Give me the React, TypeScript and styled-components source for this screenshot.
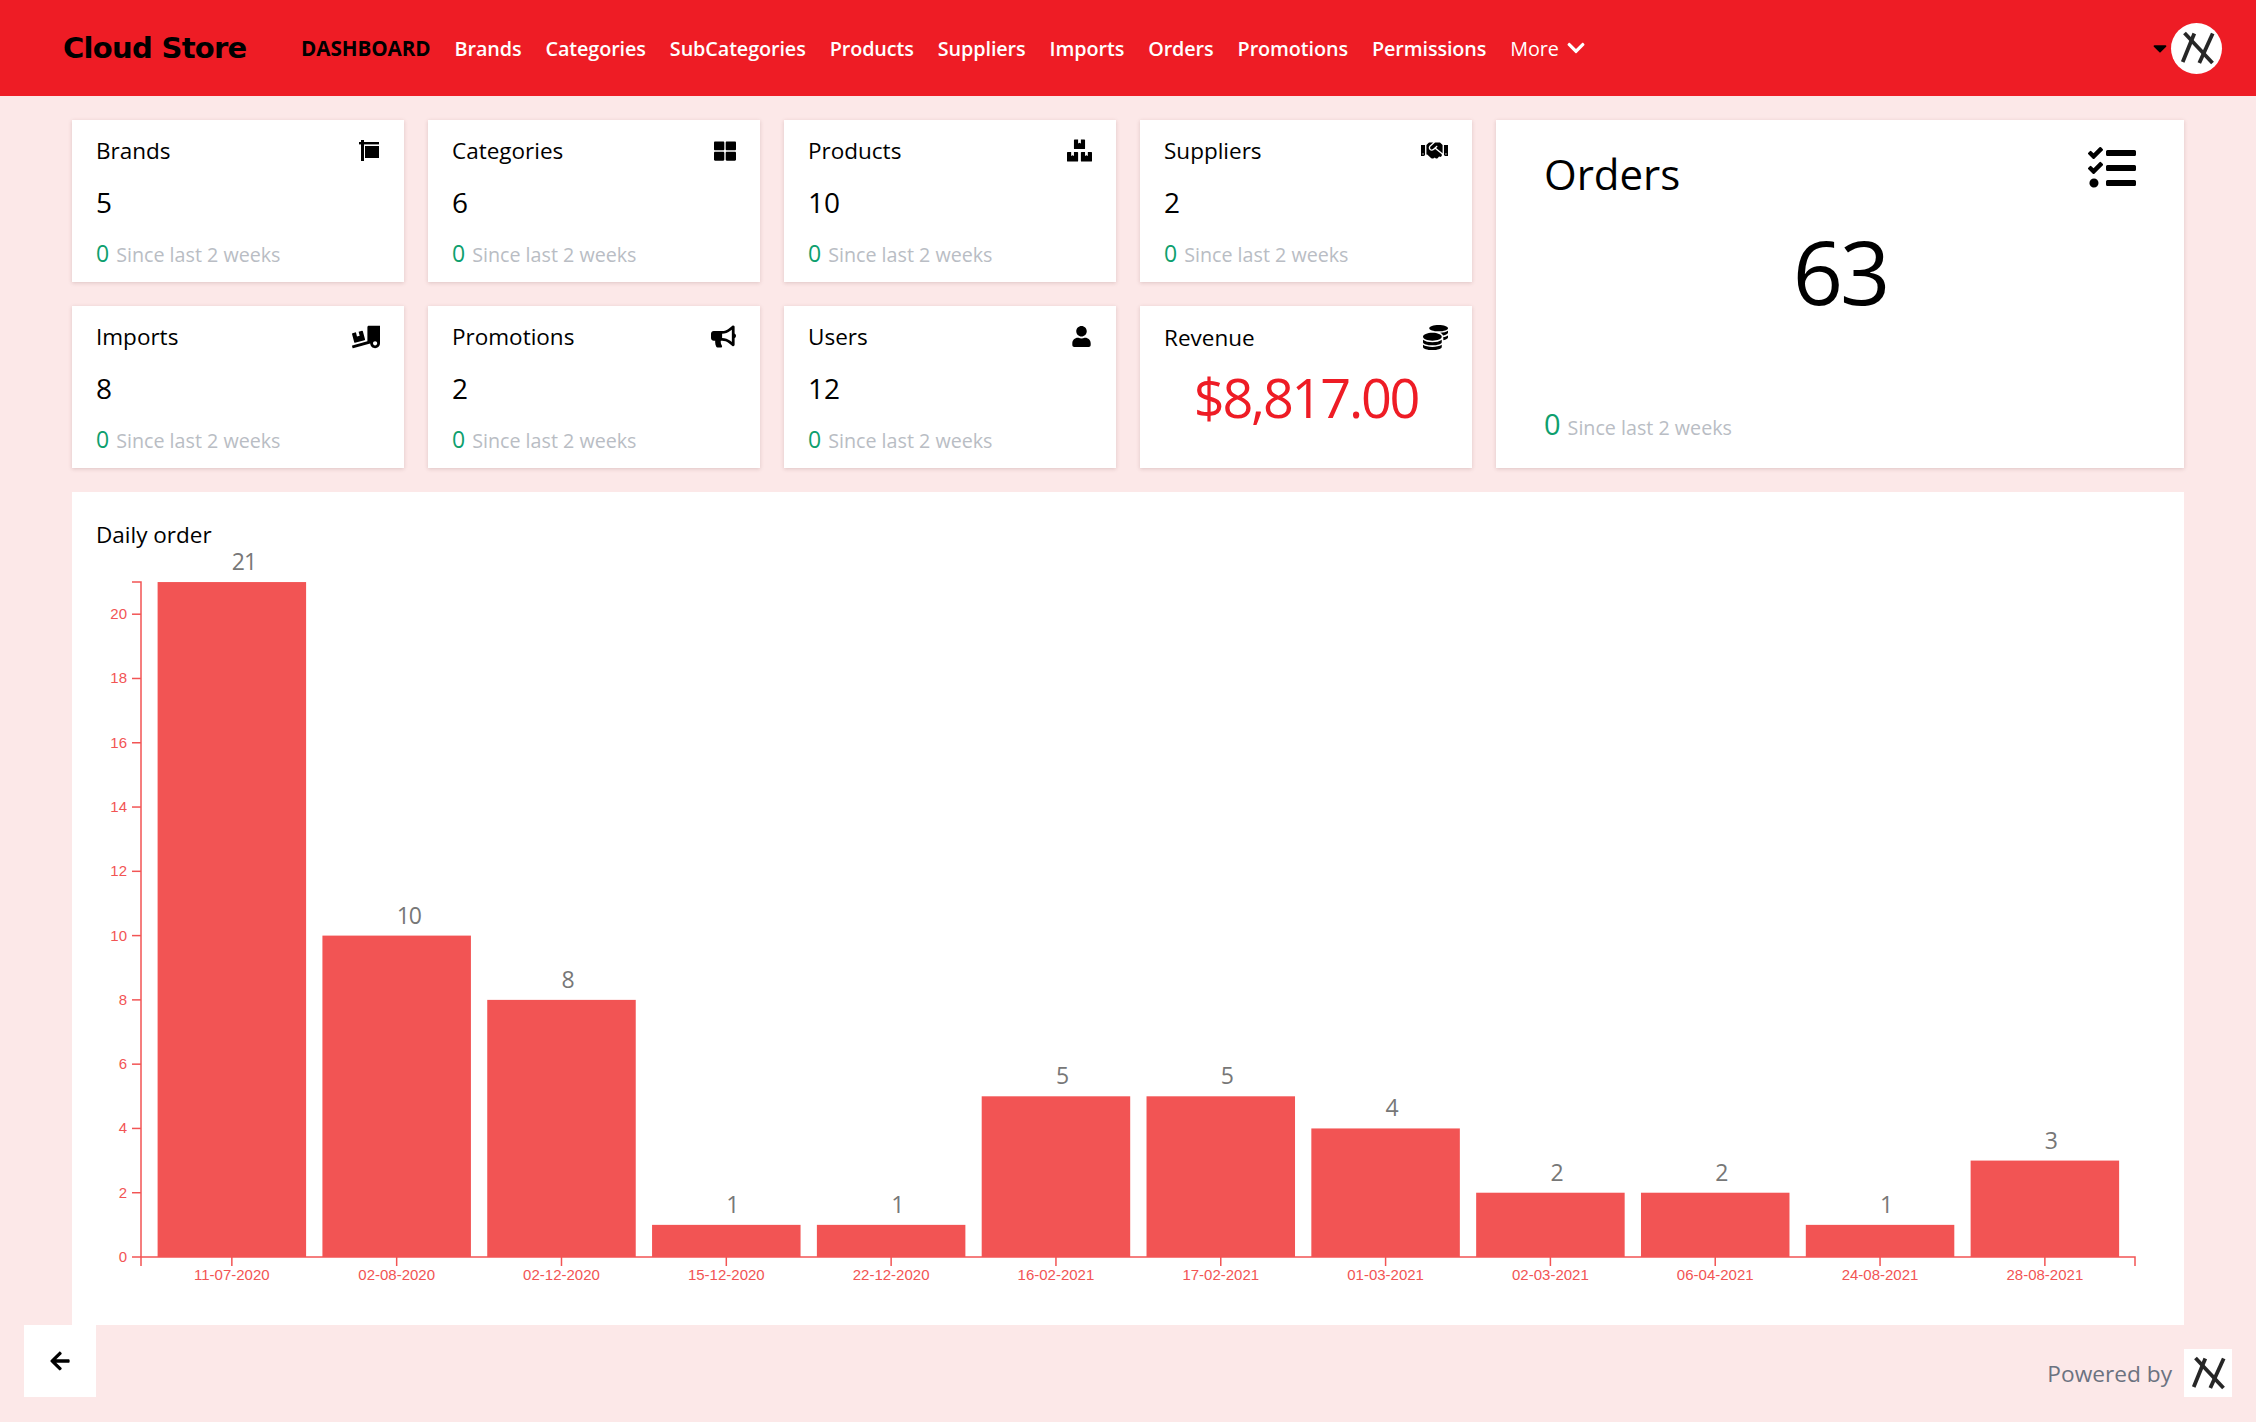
import React from "react"
import styled, { createGlobalStyle } from "styled-components"
import {
    FaArrowLeft,
    FaBoxes,
    FaBullhorn,
    FaCaretDown,
    FaChevronDown,
    FaCoins,
    FaHandshake,
    FaTasks,
    FaThLarge,
    FaTruckLoading,
    FaUser,
} from "react-icons/fa"

const RED = "#ee1c25"
const BAR = "#f25454"

const GlobalStyle = createGlobalStyle`
    html, body {
        margin: 0;
        padding: 0;
        background: #fce8e8;
    }
    body {
        font-family: "Open Sans", "Noto Sans", sans-serif;
        color: #000;
    }
    * {
        box-sizing: border-box;
    }
`

const Page = styled.div`
    width: 2256px;
    height: 1422px;
    overflow: hidden;
    background: #fce8e8;
`

const Header = styled.header`
    display: flex;
    align-items: center;
    height: 96px;
    padding: 0 34px 0 63px;
    background: ${RED};
`

const Logo = styled.div`
    width: 238px;
    font-family: "DejaVu Sans", sans-serif;
    font-size: 29px;
    font-weight: 700;
    letter-spacing: -0.7px;
    color: #000;
`

const Nav = styled.nav`
    display: flex;
    align-items: center;
    gap: 24px;
`

const NavLink = styled.a<{ $active?: boolean; $light?: boolean }>`
    display: flex;
    align-items: center;
    gap: 7px;
    font-size: ${(p) => (p.$active ? "20.7px" : "19.8px")};
    font-weight: ${(p) => (p.$active ? 700 : p.$light ? 400 : 600)};
    letter-spacing: -0.1px;
    color: ${(p) => (p.$active ? "#000" : "#fff")};
    text-transform: ${(p) => (p.$active ? "uppercase" : "none")};
`

const UserMenu = styled.div`
    display: flex;
    align-items: center;
    margin-left: auto;
`

const Avatar = styled.div`
    display: flex;
    align-items: center;
    justify-content: center;
    width: 51px;
    height: 51px;
    border-radius: 50%;
    background: #fff;
`

const Main = styled.main`
    padding: 24px 72px 0;
`

const StatGrid = styled.section`
    display: grid;
    grid-template-columns: repeat(4, 332px) 688px;
    grid-template-rows: 162px 162px;
    gap: 24px;
`

const Card = styled.div`
    display: flex;
    flex-direction: column;
    padding: 15px 24px 11px;
    background: #fff;
    box-shadow: 0 1px 4px rgba(120, 70, 70, 0.22);
`

const OrdersCard = styled(Card)`
    grid-column: 5;
    grid-row: 1 / span 2;
    padding: 24px 48px 21px;
`

const CardHead = styled.div`
    display: flex;
    align-items: center;
    justify-content: space-between;
    height: 32px;
    font-size: 22.5px;
`

const OrdersHead = styled(CardHead)`
    align-items: flex-start;
    height: 60px;
    font-size: 42px;
    line-height: 60px;
`

const CardValue = styled.div`
    margin-top: 17px;
    font-size: 28px;
    line-height: 38px;
`

const RevenueValue = styled.div`
    margin-top: 9px;
    font-size: 54px;
    line-height: 70px;
    letter-spacing: -2.2px;
    text-align: center;
    color: ${RED};
`

const OrdersValue = styled.div`
    margin-top: 17px;
    font-size: 88px;
    line-height: 100px;
    letter-spacing: -3px;
    text-align: center;
`

const CardFoot = styled.div<{ $big?: boolean }>`
    display: flex;
    align-items: baseline;
    gap: 7px;
    margin-top: ${(p) => (p.$big ? "auto" : "16px")};
    line-height: ${(p) => (p.$big ? "38px" : "32px")};
    font-size: 19.7px;
    color: #b9bdc4;
`

const Growth = styled.span<{ $big?: boolean }>`
    font-size: ${(p) => (p.$big ? "29px" : "23px")};
    color: #0e9f6e;
`

const ChartPanel = styled.section`
    height: 833px;
    margin-top: 24px;
    padding-top: 23px;
    background: #fff;
`

const ChartTitle = styled.div`
    height: 41px;
    padding-left: 24px;
    font-size: 22.5px;
    line-height: 40px;
`

const ChartSvg = styled.svg`
    display: block;
    overflow: visible;
`

const Footer = styled.footer`
    display: flex;
    align-items: flex-end;
    justify-content: space-between;
    height: 72px;
    padding: 0 24px;
`

const BackButton = styled.button`
    display: flex;
    align-items: center;
    justify-content: center;
    width: 72px;
    height: 72px;
    padding: 0;
    border: 0;
    background: #fff;
    color: #000;
    font-size: 22px;
`

const Powered = styled.div`
    display: flex;
    align-items: center;
    gap: 12px;
    font-size: 22.7px;
    color: #6b7280;
`

const LogoBox = styled.div`
    display: flex;
    width: 48px;
    height: 48px;
    background: #fff;
`

const LogoMark = () => (
    <svg width="48" height="48" viewBox="0 0 48 48" fill="none" stroke="#262626" strokeWidth="3.8">
        <path d="M11.5 9 L39.5 39" />
        <path d="M39.7 9.5 L26.3 39" />
        <path d="M21.3 9.5 L9.7 38" />
    </svg>
)

const BrandFlag = () => (
    <svg width="22" height="22" viewBox="0 0 22 22" fill="#000">
        <rect x="3" y="0" width="3" height="21" />
        <rect x="1" y="2" width="20" height="2.4" />
        <rect x="7" y="6" width="14" height="12" />
    </svg>
)

const stats = [
    { title: "Brands", value: "5", icon: <BrandFlag /> },
    { title: "Categories", value: "6", icon: <FaThLarge size={22} /> },
    { title: "Products", value: "10", icon: <FaBoxes size={25} /> },
    { title: "Suppliers", value: "2", icon: <FaHandshake size={27} /> },
    { title: "Imports", value: "8", icon: <FaTruckLoading size={28} /> },
    { title: "Promotions", value: "2", icon: <FaBullhorn size={25} /> },
    { title: "Users", value: "12", icon: <FaUser size={21} /> },
]

const links = ["Brands", "Categories", "SubCategories", "Products", "Suppliers", "Imports", "Orders", "Promotions", "Permissions"]

const orders = [
    { date: "11-07-2020", count: 21 },
    { date: "02-08-2020", count: 10 },
    { date: "02-12-2020", count: 8 },
    { date: "15-12-2020", count: 1 },
    { date: "22-12-2020", count: 1 },
    { date: "16-02-2021", count: 5 },
    { date: "17-02-2021", count: 5 },
    { date: "01-03-2021", count: 4 },
    { date: "02-03-2021", count: 2 },
    { date: "06-04-2021", count: 2 },
    { date: "24-08-2021", count: 1 },
    { date: "28-08-2021", count: 3 },
]

const AXIS_X = 69
const BASE_Y = 701
const UNIT = 32.14
const STEP = 164.82
const BAR_X = 85.6
const BAR_W = 148.5
const AXIS_END = 2063
const yTicks = [0, 2, 4, 6, 8, 10, 12, 14, 16, 18, 20]

const OrderChart = () => (
    <ChartSvg width="2112" height="769" viewBox="0 0 2112 769">
        {orders.map((o, i) => {
            const x = BAR_X + STEP * i
            const h = o.count * UNIT
            const center = x + BAR_W / 2
            return (
                <g key={o.date}>
                    <rect x={x} y={BASE_Y - h} width={BAR_W} height={h} fill={BAR} />
                    <text
                        x={center}
                        y={BASE_Y - h - 12}
                        fontFamily="Open Sans, sans-serif"
                        fontSize="23"
                        letterSpacing="-1"
                        fill="#777"
                    >
                        {o.count}
                    </text>
                    <line x1={center} x2={center} y1={BASE_Y} y2={BASE_Y + 9} stroke={BAR} strokeWidth="1.5" />
                    <text
                        x={center}
                        y={BASE_Y + 23}
                        textAnchor="middle"
                        fontFamily="Liberation Sans, sans-serif"
                        fontSize="15"
                        fill={BAR}
                    >
                        {o.date}
                    </text>
                </g>
            )
        })}
        {yTicks.map((t) => (
            <g key={t}>
                <line x1={AXIS_X - 9} x2={AXIS_X} y1={BASE_Y - t * UNIT} y2={BASE_Y - t * UNIT} stroke={BAR} strokeWidth="1.5" />
                <text
                    x={AXIS_X - 14}
                    y={BASE_Y - t * UNIT + 5}
                    textAnchor="end"
                    fontFamily="Liberation Sans, sans-serif"
                    fontSize="15"
                    fill={BAR}
                >
                    {t}
                </text>
            </g>
        ))}
        <path
            d={`M${AXIS_X - 9} ${BASE_Y - 21 * UNIT} H${AXIS_X} V${BASE_Y}`}
            fill="none"
            stroke={BAR}
            strokeWidth="1.5"
        />
        <path
            d={`M${AXIS_X} ${BASE_Y + 9} V${BASE_Y} H${AXIS_END} V${BASE_Y + 9}`}
            fill="none"
            stroke={BAR}
            strokeWidth="1.5"
        />
    </ChartSvg>
)

const App = () => (
    <Page>
        <GlobalStyle />
        <Header>
            <Logo>Cloud Store</Logo>
            <Nav>
                <NavLink $active>Dashboard</NavLink>
                {links.map((l) => (
                    <NavLink key={l}>{l}</NavLink>
                ))}
                <NavLink $light>
                    More <FaChevronDown size={20} />
                </NavLink>
            </Nav>
            <UserMenu>
                <FaCaretDown size={22} color="#000" />
                <Avatar>
                    <LogoMark />
                </Avatar>
            </UserMenu>
        </Header>
        <Main>
            <StatGrid>
                {stats.slice(0, 4).map((s) => (
                    <Card key={s.title}>
                        <CardHead>
                            {s.title}
                            {s.icon}
                        </CardHead>
                        <CardValue>{s.value}</CardValue>
                        <CardFoot>
                            <Growth>0</Growth> Since last 2 weeks
                        </CardFoot>
                    </Card>
                ))}
                <OrdersCard>
                    <OrdersHead>
                        Orders
                        <FaTasks size={48} />
                    </OrdersHead>
                    <OrdersValue>63</OrdersValue>
                    <CardFoot $big>
                        <Growth $big>0</Growth> Since last 2 weeks
                    </CardFoot>
                </OrdersCard>
                {stats.slice(4).map((s) => (
                    <Card key={s.title}>
                        <CardHead>
                            {s.title}
                            {s.icon}
                        </CardHead>
                        <CardValue>{s.value}</CardValue>
                        <CardFoot>
                            <Growth>0</Growth> Since last 2 weeks
                        </CardFoot>
                    </Card>
                ))}
                <Card>
                    <CardHead>
                        Revenue
                        <FaCoins size={25} />
                    </CardHead>
                    <RevenueValue>$8,817.00</RevenueValue>
                </Card>
            </StatGrid>
            <ChartPanel>
                <ChartTitle>Daily order</ChartTitle>
                <OrderChart />
            </ChartPanel>
        </Main>
        <Footer>
            <BackButton>
                <FaArrowLeft />
            </BackButton>
            <Powered>
                Powered by
                <LogoBox>
                    <LogoMark />
                </LogoBox>
            </Powered>
        </Footer>
    </Page>
)

export default App
